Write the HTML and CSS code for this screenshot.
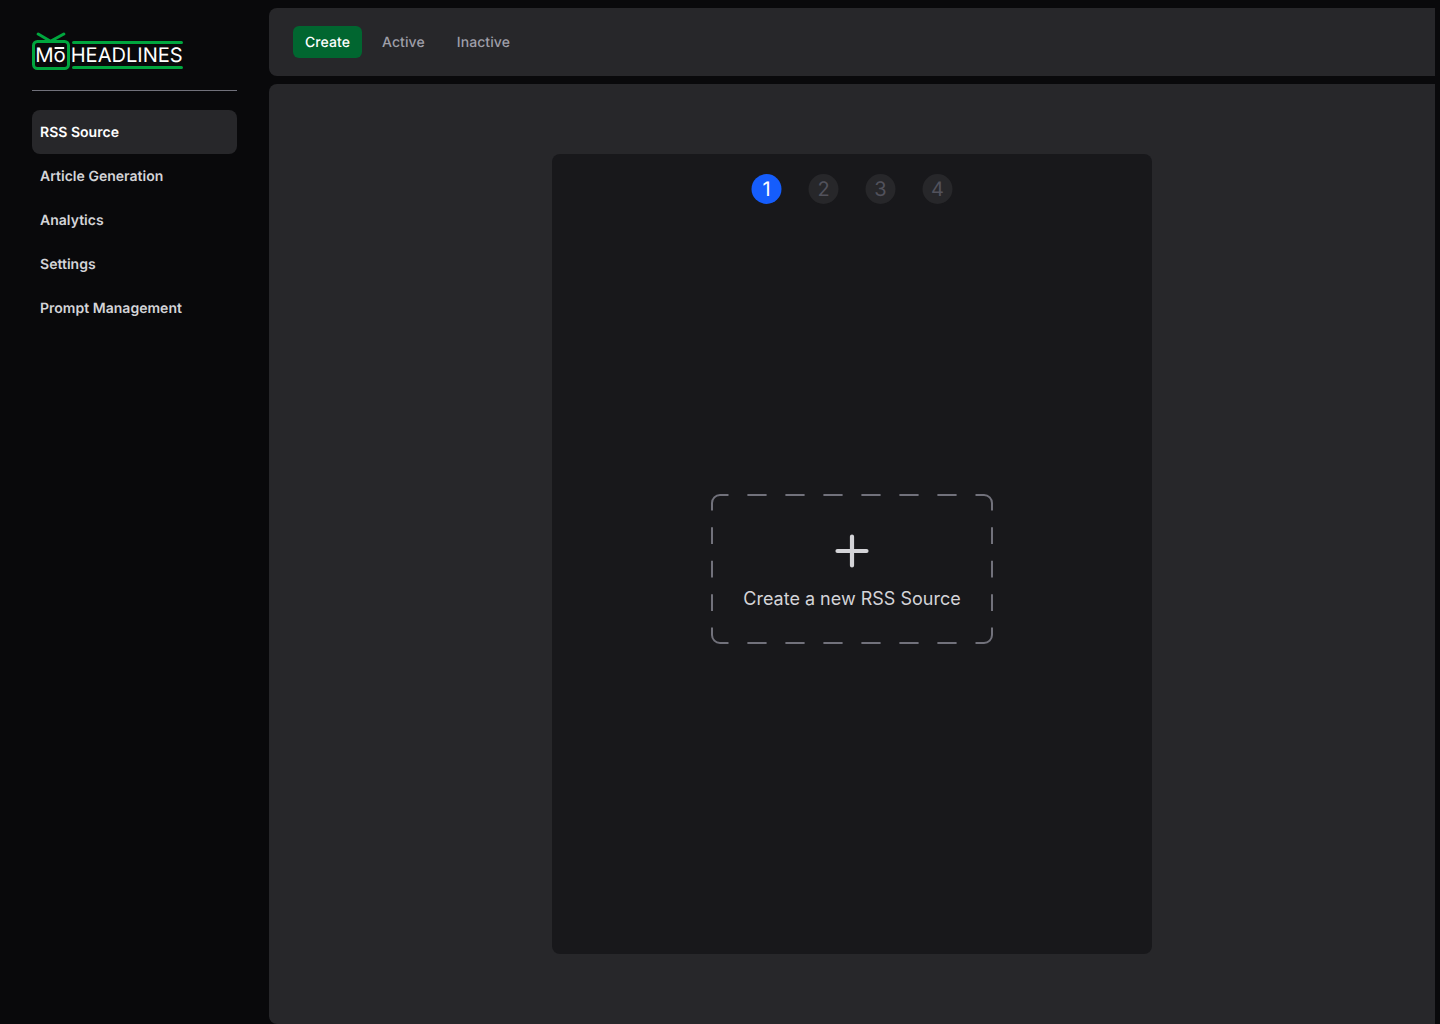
FILE: index.html
```html
<!DOCTYPE html>
<html lang="en">
<head>
<meta charset="utf-8">
<title>Mō Headlines</title>
<link rel="stylesheet" href="styles.css">
</head>
<body>
<div class="app">
  <aside class="sidebar">
    <div class="brand">
      <svg class="logo" width="152" height="40" viewBox="0 0 152 40" role="img" aria-label="Mō Headlines">
        <g class="logo-lines">
          <rect x="1.5" y="9.5" width="35" height="27" rx="4"/>
          <path d="M6.2 2L18.5 9.2L31.8 2M41.5 10.5H149.5M41.5 35.5H149.5"/>
        </g>
        <text x="3.2" y="30" textLength="30.6" lengthAdjust="spacingAndGlyphs">Mō</text>
        <path class="macron" d="M22.6 16H32.2"/>
        <text x="38.7" y="30" textLength="112" lengthAdjust="spacingAndGlyphs">HEADLINES</text>
      </svg>
    </div>
    <nav class="menu">
      <a class="menu-item active">RSS Source</a>
      <a class="menu-item">Article Generation</a>
      <a class="menu-item">Analytics</a>
      <a class="menu-item">Settings</a>
      <a class="menu-item">Prompt Management</a>
    </nav>
  </aside>
  <main class="main">
    <header class="tabs">
      <a class="tab selected">Create</a>
      <a class="tab">Active</a>
      <a class="tab">Inactive</a>
    </header>
    <section class="content">
      <div class="panel">
        <div class="steps">
          <span class="step current">1</span>
          <span class="step">2</span>
          <span class="step">3</span>
          <span class="step">4</span>
        </div>
        <div class="panel-body">
          <button class="create">
            <svg class="outline" width="282" height="150" viewBox="0 0 282 150" aria-hidden="true">
              <path d="M1 16.5V9A8 8 0 0 1 9 1H17.5M264.5 1H273A8 8 0 0 1 281 9V16.5M281 133.5V141A8 8 0 0 1 273 149H264.5M17.5 149H9A8 8 0 0 1 1 141V133.5"/>
              <path stroke-dasharray="19.2 18.8" d="M36.4 1H246M36.4 149H246"/>
              <path stroke-dasharray="16.9 16.6" d="M1 33.2V117.2M281 33.2V117.2"/>
            </svg>
            <svg class="plus" width="50" height="50" viewBox="0 0 50 50" aria-hidden="true"><path d="M25 10.5V39.5M10.5 25H39.5"/></svg>
            <span>Create a new RSS Source</span>
          </button>
        </div>
      </div>
    </section>
  </main>
</div>
</body>
</html>
```
FILE: styles.css
```css
* { box-sizing: border-box; }
body {
  margin: 0;
  background: #09090b;
  color: #d4d4d8;
  font-family: Inter, "Liberation Sans", sans-serif;
  font-size: 14px;
  line-height: 20px;
  text-rendering: geometricPrecision;
}
.app { display: flex; height: 100vh; overflow: hidden; }
.sidebar { width: 269px; flex: none; padding: 32px; }
.brand { width: 205px; height: 59px; border-bottom: 1px solid #71717b; }
.logo { display: block; }
.logo text { font-size: 20px; fill: #fff; }
.macron { stroke: #fff; stroke-width: 2; }
.logo-lines { fill: none; stroke: #00a63e; stroke-width: 3; stroke-linecap: round; }
.menu { display: flex; flex-direction: column; width: 205px; margin-top: 19px; }
.menu-item { padding: 13px 8px 11px; border-radius: 8px; font-weight: 600; letter-spacing: 0.02px; }
.menu-item.active { background: #27272a; color: #fff; }
.main { flex: 1; display: flex; flex-direction: column; gap: 8px; padding: 8px 5px 0 0; }
.tabs {
  display: flex;
  align-items: center;
  gap: 8px;
  height: 68px;
  padding: 0 24px;
  background: #27272a;
  border-radius: 8px 0 0 8px;
}
.tab { padding: 7px 12px 5px; border-radius: 6px; color: #9f9fa9; font-weight: 500; letter-spacing: 0.08px; }
.tab.selected { background: #016630; color: #fff; }
.content {
  flex: 1;
  display: flex;
  align-items: center;
  justify-content: center;
  background: #27272a;
  border-radius: 8px 0 0 8px;
}
.panel {
  display: flex;
  flex-direction: column;
  width: 600px;
  height: 800px;
  padding: 20px;
  background: #18181b;
  border-radius: 8px;
}
.steps { display: flex; justify-content: center; gap: 27px; padding-right: 1px; transform: translateX(0.5px); }
.step {
  width: 30px;
  height: 30px;
  border-radius: 50%;
  background: #27272a;
  color: #52525c;
  font-size: 20px;
  font-weight: 400;
  line-height: 30px;
  text-align: center;
}
.step.current { background: #155dfc; color: #fff; }
.panel-body { flex: 1; display: flex; align-items: center; justify-content: center; }
.create {
  position: relative;
  display: flex;
  flex-direction: column;
  align-items: center;
  gap: 9px;
  width: 282px;
  height: 150px;
  padding: 32px 0 0;
  border: 0;
  background: none;
  color: #d4d4d8;
  font: 400 18px/28px Inter, "Liberation Sans", sans-serif;
  white-space: nowrap;
}
.outline { position: absolute; inset: 0; fill: none; stroke: #71717b; stroke-width: 2; }
.plus { fill: none; stroke: #d4d4d8; stroke-width: 4.2; stroke-linecap: round; }
```
